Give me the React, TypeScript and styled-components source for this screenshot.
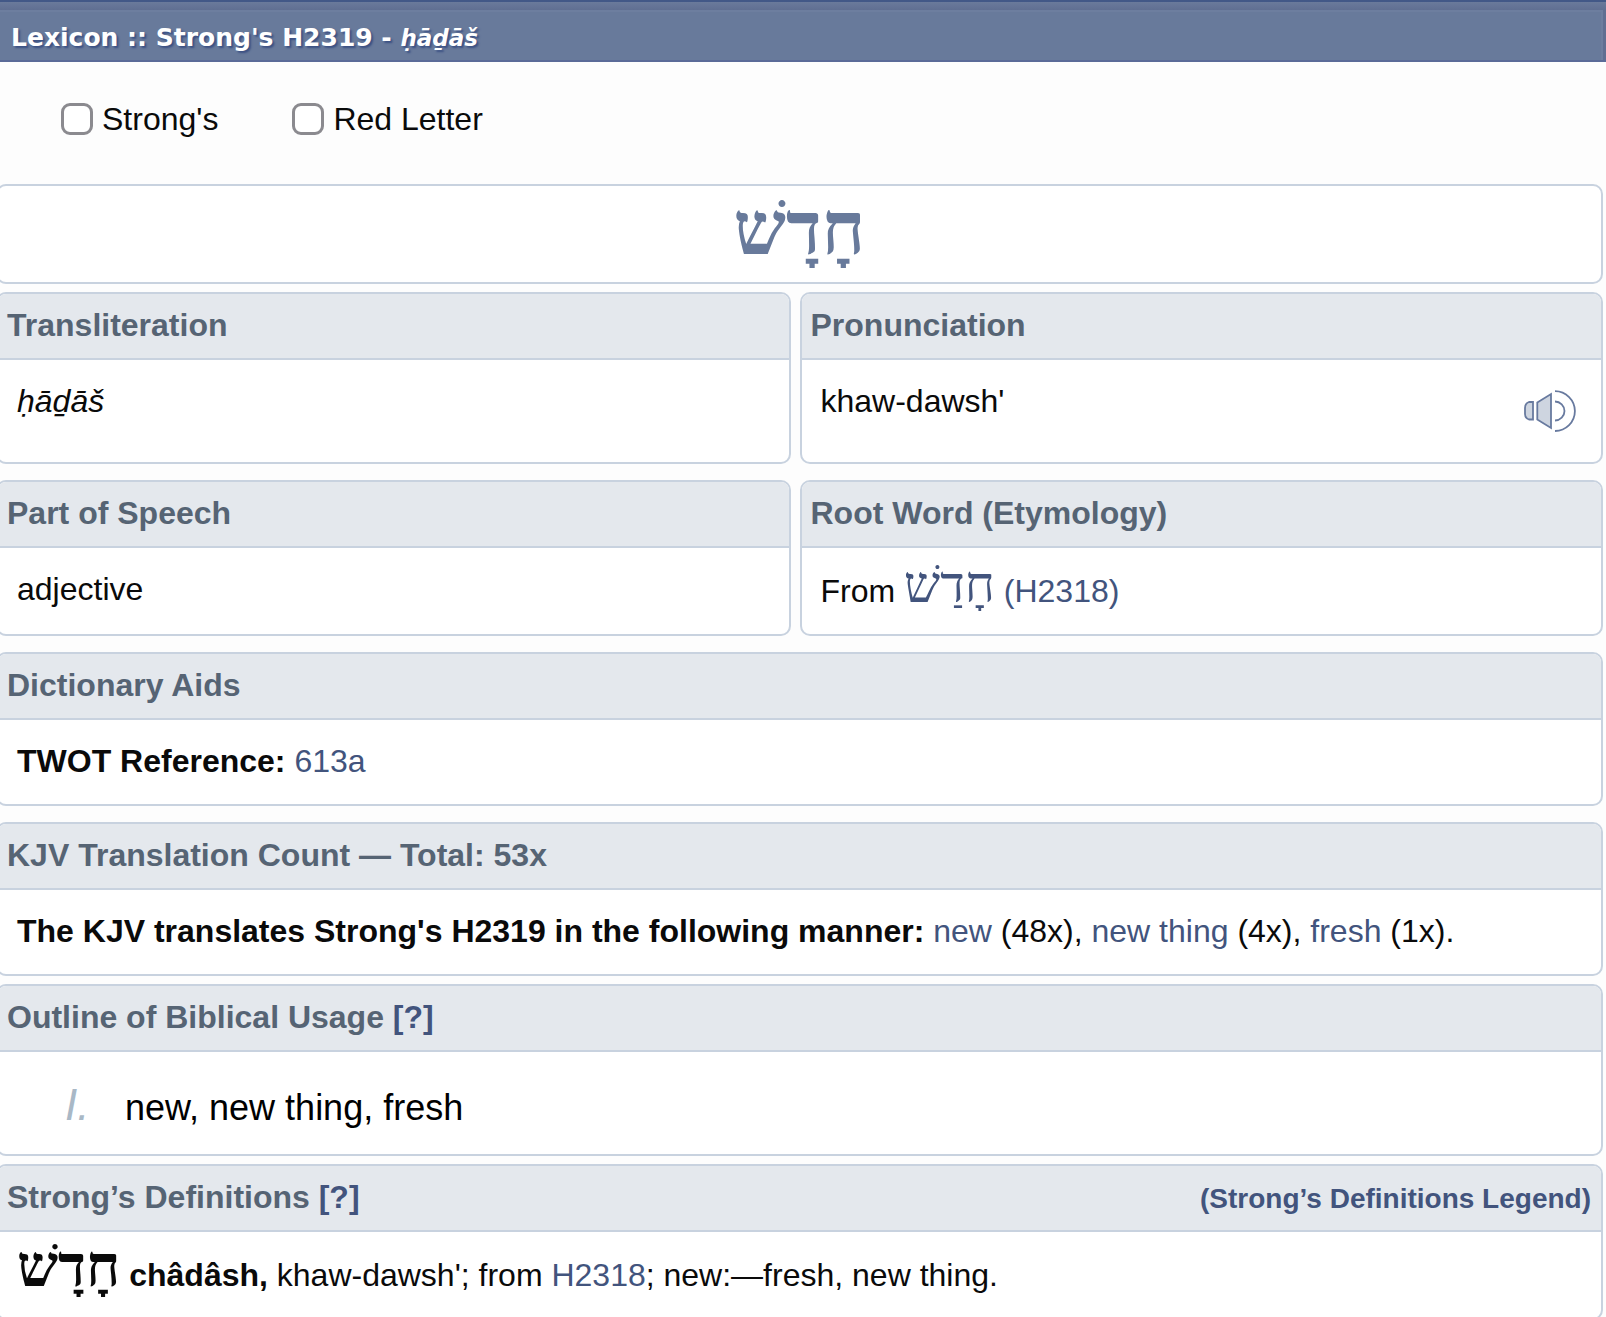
import React from "react";
import styled, { createGlobalStyle } from "styled-components";

const GlobalStyle = createGlobalStyle`
  *, *::before, *::after { box-sizing: border-box; }
  body {
    margin: 0;
    background: #fdfdfd;
    color: #0a0a0a;
    font-family: "Liberation Sans", Arial, sans-serif;
    font-size: 32px;
    line-height: 34px;
  }
`;

const line = "#c8d2df";
const linkColor = "#42547d";

const Page = styled.div`
  max-height: 100vh;
  overflow-x: hidden;
  overflow-y: auto;
  scrollbar-width: none;
`;

const TitleBar = styled.header`
  padding: 8px 3px 0 0;
  border-top: 2px solid #425887;
  border-bottom: 2px solid #5b6b98;
  background: #60708f linear-gradient(#6a7a9b, #606f92 8px);
`;

const PageTitle = styled.h1`
  margin: 0;
  padding: 11px 11px 7px;
  border-top: 2px solid #6d7e9f;
  border-right: 2px solid #6d7e9f;
  background: #687a9b;
  color: #fff;
  font: bold 25px/30px "DejaVu Sans", Verdana, sans-serif;
  text-shadow: 2px 2px 2px #3b5083;

  em {
    font-size: 23px;
    line-height: 20px;
  }
`;

const Options = styled.form`
  display: flex;
  flex-wrap: wrap;
  gap: 8px 74px;
  padding: 40px 61px 48px;
`;

const Option = styled.label`
  display: flex;
  align-items: center;
  gap: 9px;
`;

const Tick = styled.input`
  appearance: none;
  width: 32px;
  height: 32px;
  margin: 0;
  border: 3px solid #8b8a8f;
  border-radius: 9px;
  background: #fff;

  &:checked {
    background: #42547d;
  }
`;

const Entry = styled.main`
  display: flex;
  flex-direction: column;
  margin: 0 3px 0 -4px;
`;

const Card = styled.section<{ $after?: number }>`
  margin-bottom: ${(p) => p.$after ?? 16}px;
  border: 2px solid ${line};
  border-radius: 10px;
  background: #fff;
  overflow: hidden;
`;

const Pair = styled.div`
  display: grid;
  grid-template-columns: 49.5% 50%;
  justify-content: space-between;
`;

const CardHead = styled.div`
  display: flex;
  flex-wrap: wrap;
  align-items: baseline;
  justify-content: space-between;
  padding: 14px 10px 16px 9px;
  border-bottom: 2px solid ${line};
  background: #e4e8ed;
`;

const CardTitle = styled.h2`
  margin: 0;
  color: #566474;
  font-size: 32px;
  line-height: 34px;
`;

const CardBody = styled.div`
  display: flex;
  justify-content: space-between;
  padding: 24px 25px 26px 19px;
`;

const Text = styled.p`
  margin: 0;
`;

const Link = styled.a`
  color: ${linkColor};
  text-decoration: none;
`;

const LegendLink = styled(Link)`
  font-size: 28px;
  font-weight: bold;
  line-height: 28px;
`;

const HebrewHeading = styled.h2`
  margin: 0;
  padding: 8px 0 18px;
  color: #687a9b;
  font: bold 74px/70px "Liberation Serif", serif;
  text-align: center;
`;

const Hebrew = styled.bdi<{ $lemma?: boolean }>`
  font-family: "Liberation Serif", serif;
  font-size: ${(p) => (p.$lemma ? 58 : 51)}px;
  line-height: ${(p) => (p.$lemma ? 22 : 26)}px;
`;

const PlayButton = styled.button`
  display: flex;
  align-items: center;
  height: 52px;
  padding: 2px 0 0;
  border: 0;
  background: none;
  cursor: pointer;
`;

const Outline = styled.ol`
  margin: 0;
  padding: 28px 24px 21px 67px;
  list-style: none;
`;

const OutlineItem = styled.li`
  display: flex;
  align-items: baseline;
  color: #000;
  font-size: 36px;
  line-height: 50px;
`;

const Numeral = styled.span`
  width: 60px;
  color: #a9b8c6;
  font-size: 44px;
  font-style: italic;
`;

function Speaker() {
  return (
    <svg width="52" height="42" viewBox="0 0 52 42" fill="none" stroke="#687a9f" strokeWidth="1.8" aria-hidden="true">
      <path d="M9 12H5Q1 13.500 1 18V24Q1 28 5 29.500H9Z" fill="#ced5e0" />
      <path d="M13.300 12.500L27 4V38L13.300 29.500Z" fill="#ced5e0" />
      <path d="M31 11.500A9.500 9.500 0 0 1 31 30.500" />
      <path d="M31 1.200A19.900 19.900 0 0 1 31 41" />
    </svg>
  );
}

function Panel(props: {
  title: React.ReactNode;
  aside?: React.ReactNode;
  after?: number;
  children: React.ReactNode;
}) {
  return (
    <Card $after={props.after}>
      <CardHead>
        <CardTitle>{props.title}</CardTitle>
        {props.aside}
      </CardHead>
      {props.children}
    </Card>
  );
}

export default function App() {
  return (
    <Page>
      <GlobalStyle />
      <TitleBar>
        <PageTitle>
          Lexicon :: Strong's H2319 - <em>ḥāḏāš</em>
        </PageTitle>
      </TitleBar>
      <Options>
        <Option htmlFor="strongs">
          <Tick type="checkbox" id="strongs" />
          Strong's
        </Option>
        <Option htmlFor="red-letter">
          <Tick type="checkbox" id="red-letter" />
          Red Letter
        </Option>
      </Options>
      <Entry>
        <Card $after={8}>
          <HebrewHeading lang="he">חָדָשׁ</HebrewHeading>
        </Card>
        <Pair>
          <Panel title="Transliteration">
            <CardBody>
              <Text>
                <em>ḥāḏāš</em>
              </Text>
            </CardBody>
          </Panel>
          <Panel title="Pronunciation">
            <CardBody>
              <Text>khaw-dawsh'</Text>
              <PlayButton type="button" aria-label="Play pronunciation">
                <Speaker />
              </PlayButton>
            </CardBody>
          </Panel>
        </Pair>
        <Pair>
          <Panel title="Part of Speech">
            <CardBody>
              <Text>adjective</Text>
            </CardBody>
          </Panel>
          <Panel title="Root Word (Etymology)">
            <CardBody>
              <Text>
                From{" "}
                <Link href="#h2318">
                  <Hebrew lang="he">חָדַשׁ</Hebrew> (H2318)
                </Link>
              </Text>
            </CardBody>
          </Panel>
        </Pair>
        <Panel title="Dictionary Aids">
          <CardBody>
            <Text>
              <strong>TWOT Reference:</strong> <Link href="#613a">613a</Link>
            </Text>
          </CardBody>
        </Panel>
        <Panel title="KJV Translation Count — Total: 53x" after={8}>
          <CardBody>
            <Text>
              <strong>The KJV translates Strong's H2319 in the following manner:</strong>{" "}
              <Link href="#new">new</Link> (48x), <Link href="#new-thing">new thing</Link> (4x),{" "}
              <Link href="#fresh">fresh</Link> (1x).
            </Text>
          </CardBody>
        </Panel>
        <Panel
          title={
            <>
              Outline of Biblical Usage <Link href="#outline-help">[?]</Link>
            </>
          }
          after={8}
        >
          <Outline>
            <OutlineItem>
              <Numeral>I.</Numeral>
              new, new thing, fresh
            </OutlineItem>
          </Outline>
        </Panel>
        <Panel
          title={
            <>
              Strong’s Definitions <Link href="#definitions-help">[?]</Link>
            </>
          }
          aside={<LegendLink href="#legend">(Strong’s Definitions Legend)</LegendLink>}
          after={0}
        >
          <CardBody>
            <Text>
              <strong>
                <Hebrew lang="he" $lemma>חָדָשׁ</Hebrew> châdâsh,
              </strong>{" "}
              khaw-dawsh'; from <Link href="#h2318">H2318</Link>; new:—fresh, new thing.
            </Text>
          </CardBody>
        </Panel>
      </Entry>
    </Page>
  );
}
